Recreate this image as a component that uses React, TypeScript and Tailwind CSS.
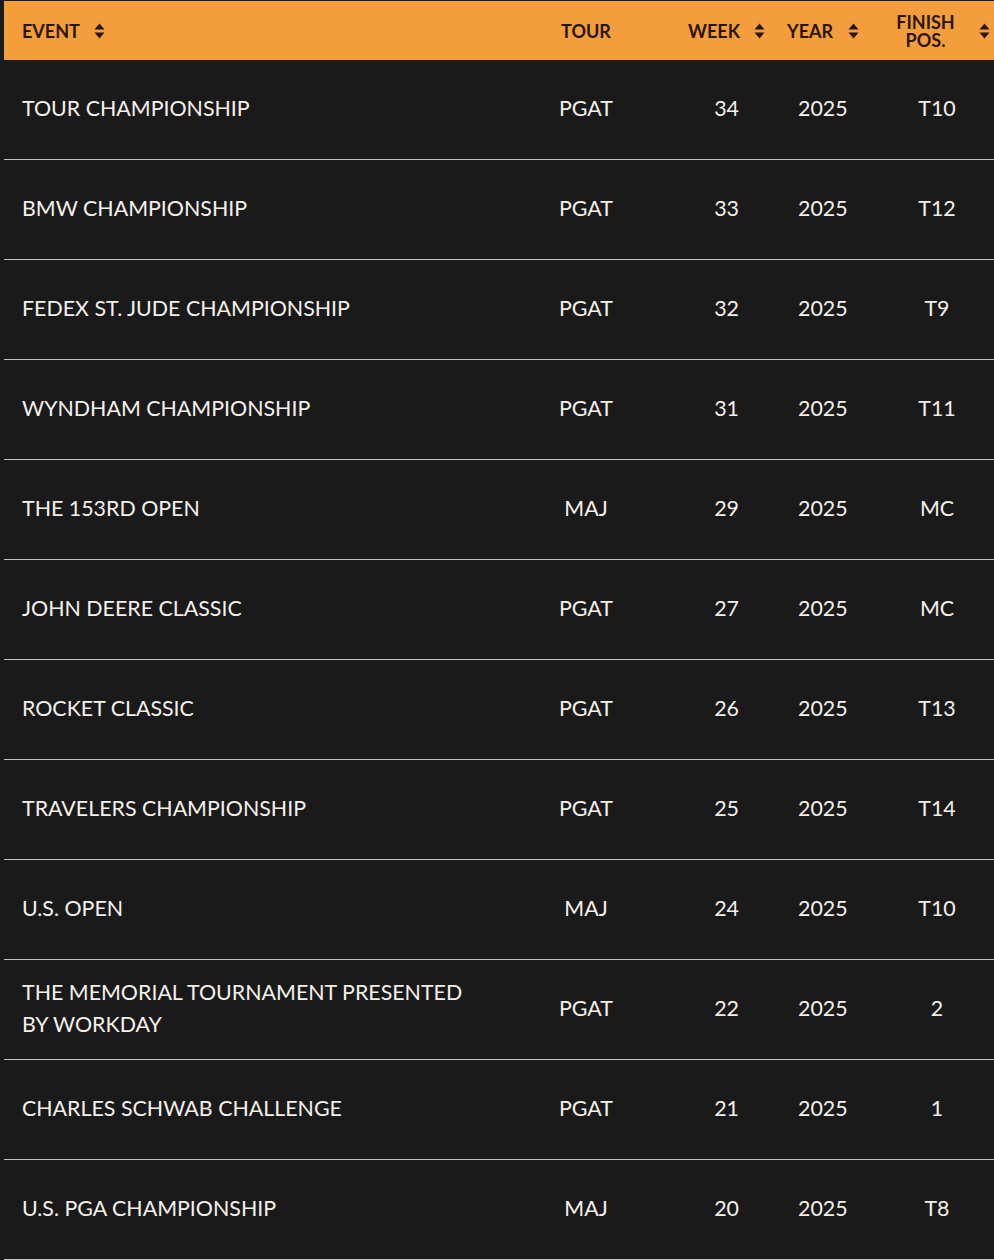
import React from 'react';

type Row = { event: string; tour: string; week: number; year: number; finish: string };

const rows: Row[] = [
  { event: 'TOUR CHAMPIONSHIP', tour: 'PGAT', week: 34, year: 2025, finish: 'T10' },
  { event: 'BMW CHAMPIONSHIP', tour: 'PGAT', week: 33, year: 2025, finish: 'T12' },
  { event: 'FEDEX ST. JUDE CHAMPIONSHIP', tour: 'PGAT', week: 32, year: 2025, finish: 'T9' },
  { event: 'WYNDHAM CHAMPIONSHIP', tour: 'PGAT', week: 31, year: 2025, finish: 'T11' },
  { event: 'THE 153RD OPEN', tour: 'MAJ', week: 29, year: 2025, finish: 'MC' },
  { event: 'JOHN DEERE CLASSIC', tour: 'PGAT', week: 27, year: 2025, finish: 'MC' },
  { event: 'ROCKET CLASSIC', tour: 'PGAT', week: 26, year: 2025, finish: 'T13' },
  { event: 'TRAVELERS CHAMPIONSHIP', tour: 'PGAT', week: 25, year: 2025, finish: 'T14' },
  { event: 'U.S. OPEN', tour: 'MAJ', week: 24, year: 2025, finish: 'T10' },
  { event: 'THE MEMORIAL TOURNAMENT PRESENTED BY WORKDAY', tour: 'PGAT', week: 22, year: 2025, finish: '2' },
  { event: 'CHARLES SCHWAB CHALLENGE', tour: 'PGAT', week: 21, year: 2025, finish: '1' },
  { event: 'U.S. PGA CHAMPIONSHIP', tour: 'MAJ', week: 20, year: 2025, finish: 'T8' },
];

const cols = 'grid grid-cols-[526px_112px_128px_100px_124px]';

function SortIcon() {
  return (
    <svg width="11" height="16" viewBox="0 0 11 16" className="shrink-0" aria-hidden="true">
      <path d="M5.5 0.5 L10.5 6.5 L0.5 6.5 Z" fill="#2b1407" />
      <path d="M5.5 15.5 L10.5 9.5 L0.5 9.5 Z" fill="#2b1407" />
    </svg>
  );
}

export default function App() {
  return (
    <div
      className="min-h-[1260px] w-[994px] bg-[#1b1a1a] pl-[4px] pt-[1px]"
      style={{ fontFamily: 'Lato, "Open Sans", sans-serif' }}
    >
      <div className={`${cols} h-[59px] items-center bg-[#f29e3c] text-[18px] font-bold uppercase leading-[18px] text-[#2b1407]`}>
        <div className="flex items-center gap-[14px] pl-[18px]">
          EVENT
          <SortIcon />
        </div>
        <div className="text-center">TOUR</div>
        <div className="flex items-center justify-end gap-[14px] pr-[5px]">
          WEEK
          <SortIcon />
        </div>
        <div className="flex items-center gap-[15px] pl-[17px]">
          YEAR
          <SortIcon />
        </div>
        <div className="flex items-center pr-[4px]">
          <div className="flex-1 pl-[2px] text-center leading-[18px]">
            <div>FINISH</div>
            <div>POS.</div>
          </div>
          <SortIcon />
        </div>
      </div>
      {rows.map((r) => (
        <div
          key={r.event}
          className={`${cols} h-[100px] items-center border-b border-[#c2c2c2] pb-[3px] text-[21.4px] leading-[32px] text-[#f5f1eb]`}
        >
          <div className="max-w-[468px] pl-[18px]">{r.event}</div>
          <div className="text-center">{r.tour}</div>
          <div className="pr-[31px] text-right">{r.week}</div>
          <div className="pl-[28px]">{r.year}</div>
          <div className="pl-[10px] text-center">{r.finish}</div>
        </div>
      ))}
    </div>
  );
}
